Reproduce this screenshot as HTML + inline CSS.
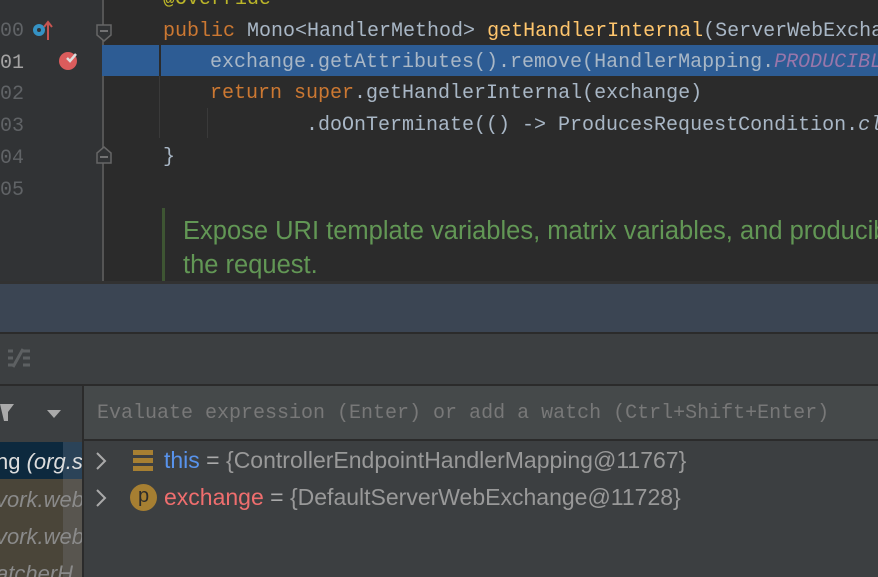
<!DOCTYPE html>
<html><head><meta charset="utf-8"><style>
*{margin:0;padding:0;box-sizing:border-box}
html,body{width:878px;height:577px;overflow:hidden}
body{background:#2b2b2b;position:relative;font-family:"Liberation Mono",monospace}
.a{position:absolute}
.code{font-size:20px;white-space:pre;color:#a9b7c6;line-height:32px}
.ln{font-size:20px;color:#606366;font-family:"Liberation Mono",monospace}
.sans{font-family:"Liberation Sans","DejaVu Sans",sans-serif}
</style></head><body>
<div class="a" style="left:0;top:0;width:103px;height:283px;background:#313335"></div>
<div class="a" style="left:102px;top:0;width:2px;height:283px;background:#555"></div>
<div class="a" style="left:102px;top:45px;width:776px;height:31px;background:#2d5c94"></div>
<div class="a" style="left:159px;top:45px;width:2px;height:31px;background:#2b2b2b"></div>
<div class="a" style="left:159px;top:76px;width:1px;height:62px;background:#3a3a3a"></div>
<div class="a" style="left:207px;top:108px;width:1px;height:30px;background:#3a3a3a"></div>
<div class="a ln" style="left:-4px;top:-16px">99</div>
<div class="a ln" style="left:-12px;top:20px">100</div>
<div class="a ln" style="left:-12px;top:52px;color:#a4a3a3">101</div>
<div class="a ln" style="left:-12px;top:83px">102</div>
<div class="a ln" style="left:-12px;top:115px">103</div>
<div class="a ln" style="left:-12px;top:147px">104</div>
<div class="a ln" style="left:-12px;top:179px">105</div>
<svg class="a" style="left:30px;top:18px" width="26" height="24"><circle cx="9" cy="12" r="6" fill="#3592c4"/><circle cx="9" cy="12" r="2" fill="#313335"/><path d="M18 22V4M14 9l4-5 4 5" stroke="#c75450" stroke-width="2" fill="none"/></svg>
<svg class="a" style="left:58px;top:48px" width="24" height="24"><circle cx="10" cy="13" r="9" fill="#db5c5c"/><path d="M9 10l3 3 6-7" stroke="#ddd" stroke-width="2.5" fill="none"/></svg>
<svg class="a" style="left:96px;top:24px" width="16" height="18"><path d="M1 1h14v10l-7 6-7-6z" fill="#313335" stroke="#666" stroke-width="1.5"/><path d="M4 7h8" stroke="#888" stroke-width="1.5"/></svg>
<svg class="a" style="left:96px;top:146px" width="16" height="18"><path d="M1 17h14V7l-7-6-7 6z" fill="#313335" stroke="#666" stroke-width="1.5"/><path d="M4 11h8" stroke="#888" stroke-width="1.5"/></svg>
<div class="a code" style="left:163px;top:-16px;color:#bbb529">@Override</div>
<div class="a code" style="left:163px;top:16px"><span style="color:#cc7832">public </span>Mono&lt;HandlerMethod&gt; <span style="color:#ffc66d">getHandlerInternal</span>(ServerWebExcha</div>
<div class="a code" style="left:210px;top:47px">exchange.getAttributes().remove(HandlerMapping.<i style="color:#9876aa">PRODUCIBL</i></div>
<div class="a code" style="left:210px;top:78px"><span style="color:#cc7832">return super</span>.getHandlerInternal(exchange)</div>
<div class="a code" style="left:306px;top:110px">.doOnTerminate(() -&gt; ProducesRequestCondition.<i>cl</i></div>
<div class="a code" style="left:163px;top:142px">}</div>
<div class="a" style="left:162px;top:208px;width:3px;height:75px;background:#3e5533"></div>
<div class="a sans" style="left:183px;top:214px;font-size:25.5px;color:#629755;line-height:34px;white-space:nowrap">Expose URI template variables, matrix variables, and producib<br>the request.</div>
<div class="a" style="left:0;top:281px;width:878px;height:3px;background:#323232"></div>
<div class="a" style="left:0;top:284px;width:878px;height:48px;background:#3b4553"></div>
<div class="a" style="left:0;top:332px;width:878px;height:2px;background:#2b2b2b"></div>
<div class="a" style="left:0;top:334px;width:878px;height:50px;background:#3c3f41"></div>
<svg class="a" style="left:7px;top:348px" width="26" height="22"><path d="M1 3h5M1 10h5M1 17h5M16 3h7M16 10h7M16 17h7M6 19l10-18" stroke="#5d6062" stroke-width="3" fill="none"/></svg>
<div class="a" style="left:0;top:384px;width:878px;height:2px;background:#2b2b2b"></div>
<div class="a" style="left:0;top:386px;width:82px;height:191px;background:#3c3f41"></div>
<div class="a" style="left:82px;top:384px;width:2px;height:193px;background:#2b2b2b"></div>
<svg class="a" style="left:0;top:400px" width="70" height="30"><path d="M0 4h14l-6 8v9h-4z" fill="#aaa"/><path d="M47 10h14l-7 8z" fill="#aaa"/></svg>
<div class="a" style="left:84px;top:386px;width:794px;height:53px;background:#45494a"></div>
<div class="a" style="left:84px;top:439px;width:794px;height:2px;background:#2b2b2b"></div>
<div class="a" style="left:97px;top:402px;font-size:20px;color:#787878;white-space:pre">Evaluate expression (Enter) or add a watch (Ctrl+Shift+Enter)</div>
<div class="a" style="left:84px;top:441px;width:794px;height:136px;background:#3c3f41"></div>
<div class="a" style="left:0;top:442px;width:64px;height:37px;background:#0d293e"></div>
<div class="a" style="left:63px;top:442px;width:19px;height:37px;background:#2b4358"></div>
<div class="a" style="left:0;top:479px;width:63px;height:98px;background:#4a4539"></div>
<div class="a" style="left:63px;top:479px;width:19px;height:98px;background:#58554f"></div>
<div class="a sans" style="left:-4px;top:449px;font-size:22px;color:#ddd;white-space:nowrap;width:86px;overflow:hidden">ng <i>(org.sp</i></div>
<div class="a sans" style="left:-4px;top:487px;font-size:22px;color:#8a8a8a;font-style:italic;white-space:nowrap;width:86px;overflow:hidden">vork.web</div>
<div class="a sans" style="left:-4px;top:524px;font-size:22px;color:#8a8a8a;font-style:italic;white-space:nowrap;width:86px;overflow:hidden">vork.web</div>
<div class="a sans" style="left:-4px;top:561px;font-size:22px;color:#8a8a8a;font-style:italic;white-space:nowrap;width:86px;overflow:hidden">atcherH</div>
<svg class="a" style="left:94px;top:451px" width="14" height="20"><path d="M3 2l8 8-8 8" stroke="#aaa" stroke-width="2" fill="none"/></svg>
<svg class="a" style="left:94px;top:488px" width="14" height="20"><path d="M3 2l8 8-8 8" stroke="#aaa" stroke-width="2" fill="none"/></svg>
<svg class="a" style="left:133px;top:448px" width="20" height="24"><rect x="0" y="2" width="20" height="5" fill="#a67f32"/><rect x="0" y="10" width="20" height="5" fill="#a67f32"/><rect x="0" y="18" width="20" height="5" fill="#a67f32"/></svg>
<div class="a sans" style="left:130px;top:484px;width:27px;height:27px;border-radius:50%;background:#a67f32;color:#2b2b2b;font-size:20px;text-align:center;line-height:25px">p</div>
<div class="a sans" style="left:164px;top:447px;font-size:23px;white-space:pre;color:#aaa"><span style="color:#5893ec">this</span> = <span style="color:#999">{ControllerEndpointHandlerMapping@11767}</span></div>
<div class="a sans" style="left:164px;top:484px;font-size:23px;white-space:pre;color:#aaa"><span style="color:#ef6e6e">exchange</span> = <span style="color:#999">{DefaultServerWebExchange@11728}</span></div>
</body></html>
